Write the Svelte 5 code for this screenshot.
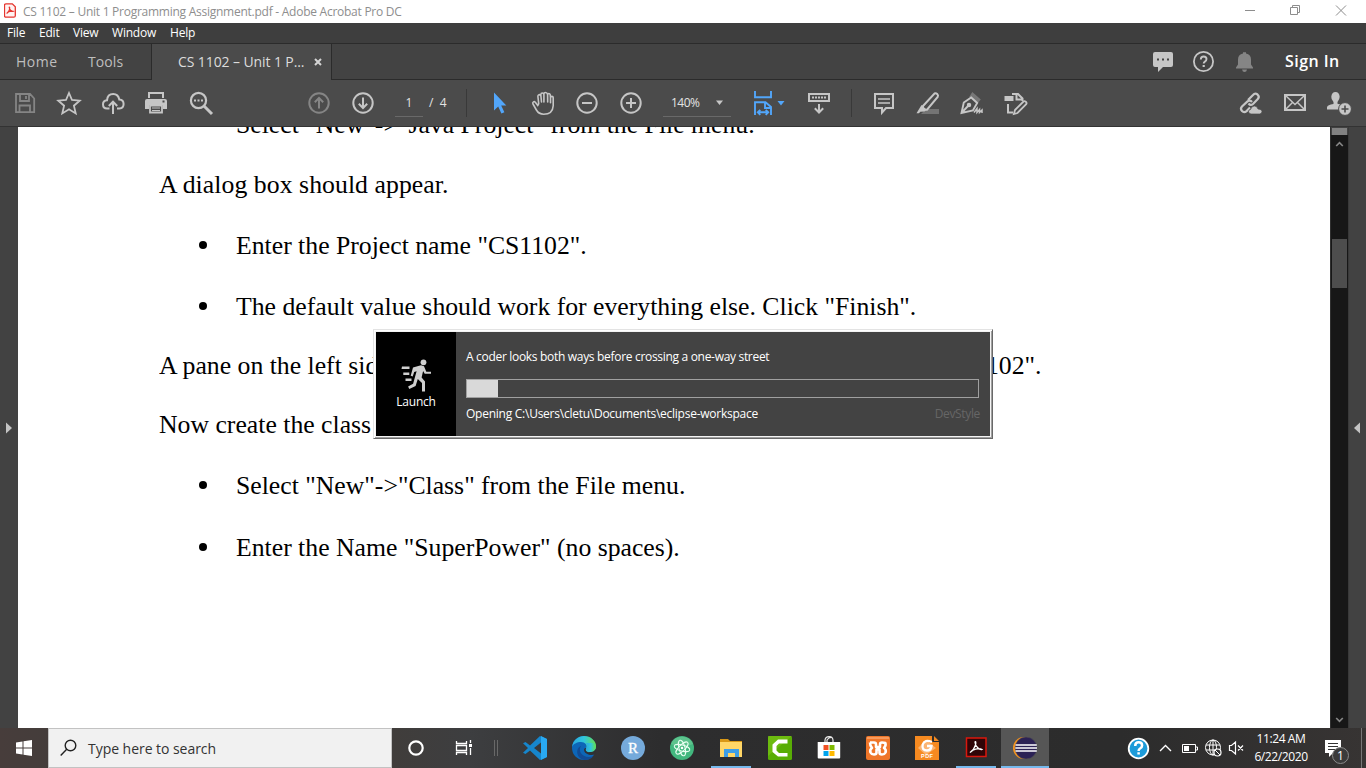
<script>
  const menus = ['File', 'Edit', 'View', 'Window', 'Help'];
</script>

<div class="screen">
  <header class="title">
    <svg class="pdf" width="12" height="15" viewBox="0 0 12 15"><path d="M1.5.8h6.8l3 3v8.900q0 1.500-1.500 1.500h-7.800q-1.500 0-1.500-1.500v-10.400q0-1.500 1.500-1.500z" fill="#fff3f2" stroke="#e5352e" stroke-width="1.300" /><path d="M2.700 10.500c1-1.800 4.500-3 6.600-2.200-1.500.7-4-1.800-4.100-4 .9-.8.8 4-2.500 6.200z" fill="none" stroke="#e5352e" stroke-width="1.200" /></svg>
    <span class="t-title">CS 1102 – Unit 1 Programming Assignment.pdf - Adobe Acrobat Pro DC</span>
    <svg class="winctl" width="126" height="23" viewBox="0 0 126 23" fill="none" stroke="#8d8d8d"><path d="M5 10.500h10M50.500 7.500h7v7h-7zM52.500 7V5.500h7v7H58M96 5.500l10 10M106 5.500l-10 10" /></svg>
  </header>
  <nav class="menu">
    {#each menus as m}<span class="m-{m}">{m}</span>{/each}
  </nav>
  <div class="tabs">
    <div class="home"><span class="t-home">Home</span><span class="t-tools">Tools</span></div>
    <div class="tab"><span class="t-tab">CS 1102 – Unit 1 P...</span><svg width="8" height="8" viewBox="0 0 8 8"><path d="M1 1l6 6M7 1L1 7" stroke="#d4d4d4" stroke-width="2" /></svg></div>
    <div class="account">
      <svg width="124" height="36" viewBox="0 0 124 36">
        <path d="M5 8h16q2 0 2 2v11q0 2-2 2h-8l-5 5v-5H5q-2 0-2-2V10q0-2 2-2z" fill="#c6c6c6" />
        <path d="M7 14.500h2v2H7zM12 14.500h2v2h-2zM17 14.500h2v2h-2z" fill="#444" />
        <circle cx="53.500" cy="17.500" r="9.600" fill="none" stroke="#c6c6c6" stroke-width="1.800" />
        <path d="M50.800 15.500q0-3 2.900-3 2.800 0 2.800 2.600 0 1.600-1.600 2.500-1.200.7-1.200 2" fill="none" stroke="#c6c6c6" stroke-width="1.900" /><path d="M52.600 21h2.200v2h-2.200z" fill="#c6c6c6" />
        <path d="M86 24.500v-1l2-3v-5q0-5 5-6V8.200h3v1.300q5 1 5 6v5l2 3v1z" fill="#858585" /><path d="M92 25.500h5q-.5 2.500-2.500 2.500t-2.500-2.500z" fill="#858585" />
      </svg>
      <b class="t-sign">Sign In</b>
    </div>
  </div>

  <div class="toolbar">
    <svg class="c first" viewBox="0 0 44 46" fill="none" stroke="#858585" stroke-width="1.800"><path d="M13 14h14l4.200 4.500v13.700H13zM17 14v7h9v-7M16.500 32v-6.500h10.500v6.500M23 16v3" /></svg>
    <svg class="c" viewBox="0 0 44 46" fill="none" stroke="#c6c6c6" stroke-width="1.800"><path d="M22 13l3 7 7.700.7-5.800 5 1.800 7.700L22 29.300l-6.700 4.100 1.800-7.700-5.800-5L19 20z" /></svg>
    <svg class="c" viewBox="0 0 44 46" fill="none" stroke="#c6c6c6" stroke-width="2"><path d="M18.500 28.500h-2.500q-4 0-4-4.200 0-3.500 4-4 .5-6.300 6.200-6.300 5 0 6.100 5.500 4.300.3 4.300 4.500t-4.100 4.500h-2.500M22 34V22M17.800 26l4.200-4.300 4.200 4.300" /></svg>
    <svg class="c" viewBox="1 0 44 46"><path d="M14 12h16v6H14zM13 19h18q2 0 2 2v8h-4v-4H15v4h-4v-8q0-2 2-2z" fill="#c6c6c6" /><path d="M16 14h12v4H16zM28.500 20.500h2v2h-2z" fill="#4b4b4b" /><path d="M16 25.500h12v7H16z" fill="#4b4b4b" stroke="#c6c6c6" stroke-width="1.800" /><path d="M18 28h8M18 30.500h8" stroke="#c6c6c6" /></svg>
    <svg class="c" viewBox="0 0 44 46"><circle cx="19.500" cy="20.500" r="7.600" fill="none" stroke="#c6c6c6" stroke-width="2.200" /><path d="M25 26l8 8" stroke="#c6c6c6" stroke-width="3" /><path d="M15 19.500h2v2h-2zM18.500 19.500h2v2h-2zM22 19.500h2v2h-2z" fill="#c6c6c6" /></svg>
    <svg class="c up" viewBox="0 0 44 46" fill="none" stroke="#858585" stroke-width="2"><circle cx="22" cy="23" r="9.700" /><path d="M22 28.500v-10M17.800 22.200l4.200-4.200 4.200 4.200" /></svg>
    <svg class="c" viewBox="0 0 44 46" fill="none" stroke="#c6c6c6" stroke-width="2"><circle cx="22" cy="23" r="9.700" /><path d="M22 17.500v10M17.800 23.800l4.200 4.200 4.200-4.200" /></svg>
    <span class="field page">1</span><span class="t-of">/&nbsp; 4</span>
    <i class="sep s1"></i>
    <svg class="c" viewBox="0 0 44 46"><path d="M17 12.500v18l4.200-4 3.200 7 3-1.300-3.200-6.700h5.100z" fill="#52a6fa" /></svg>
    <svg class="c" viewBox="0 0 44 46" fill="none" stroke="#c6c6c6" stroke-width="1.600" stroke-linecap="round" stroke-linejoin="round"><path d="M16.800 25.500l-2.500-3.300q-1-1-2-.2t-.3 2l3.400 6q2.400 4.200 7.300 4.200 9 0 9.500-8.500v-8q0-1.300-1.300-1.300t-1.400 1.300v5M29.500 17.700l-.3-3.100q-.3-1.100-1.400-1.100T26.600 15l.1 7M26.500 14.500q-.3-2-2-2t-1.600 2V22M22.900 14.500q-.2-1.500-1.600-1.500t-1.500 1.700l.7 7.300M19.600 15.500q-.6-1.100-1.700-.8t-1 1.800l.8 7.200-1 2" /></svg>
    <svg class="c" viewBox="0 0 44 46" fill="none" stroke="#c6c6c6" stroke-width="2"><circle cx="22" cy="23" r="9.700" /><path d="M17 23h10" /></svg>
    <svg class="c" viewBox="0 0 44 46" fill="none" stroke="#c6c6c6" stroke-width="2"><circle cx="22" cy="23" r="9.700" /><path d="M17 23h10M22 18v10" /></svg>
    <div class="field zoom"><span class="t-zoom">140%</span><svg width="7" height="5" viewBox="0 0 7 5"><path d="M0 .5h7L3.500 5z" fill="#c6c6c6" /></svg></div>
    <svg class="c fit" viewBox="0 0 44 46"><g fill="none" stroke="#52a6fa" stroke-width="1.900"><path d="M14 11v6.200h16V11M14 35V22.200h10.500l5.500 4.800v8M24 22.500V28h6M17 32.300h10M19.300 29.800l-2.500 2.500 2.500 2.500M24.700 29.800l2.500 2.500-2.500 2.500" /></g><path d="M36.500 21h7L40 25.500z" fill="#52a6fa" /></svg>
    <svg class="c kb" viewBox="0 0 44 46" fill="none" stroke="#c6c6c6" stroke-width="2"><path d="M12 14h20v7H12zM22 24v8M17.800 28.300l4.200 4.200 4.200-4.200" /><path d="M15 17.500h14" stroke-dasharray="2 1" /></svg>
    <i class="sep s2"></i>
    <svg class="c" viewBox="0 0 44 46" fill="none" stroke="#c6c6c6" stroke-width="2"><path d="M13 14h18v14h-7l-4 4.500V28h-7z" /><path d="M16 19h12M16 23h12" stroke-width="1.500" /></svg>
    <svg class="c" viewBox="1 0 44 46"><path d="M21 29h13v5H16z" fill="#747474" /><path d="M18 26L29.500 13.500q1.300-.7 2.700.6t.5 2.900L22 29.700h-4z" fill="none" stroke="#c6c6c6" stroke-width="2" /><path d="M16.500 25l5 4.500-2 2-4.200.3-1.300 1.500h-2.500z" fill="#c6c6c6" /></svg>
    <svg class="c" viewBox="1 0 44 46" fill="none" stroke="#c6c6c6" stroke-width="1.900"><path d="M21 17.500l2.500-4 7 6-3 3.500" fill="#777" stroke="#777" /><path d="M12.500 33l2.300-10.500 7.400-5 6 5.500-4.300 7.500zM12.500 33l7-7.500" fill="#4b4b4b" /><circle cx="20" cy="25" r="1.300" fill="#c6c6c6" /><path d="M25 32.500l3-4v4l2.500-3v3l2.500-2.500v3" stroke-width="1.500" /></svg>
    <svg class="c stamp" viewBox="1 0 44 46"><path d="M15 24v8.500h5M19 14h6l4.500 4.500V21M23.500 14v5.500h6" fill="none" stroke="#c6c6c6" stroke-width="2" /><path d="M11.500 16h9v5h-9z" fill="#c6c6c6" /><path d="M22 30l8.500-8.500q1-.8 2.300.3t.4 2.400L24.500 33l-3.600 1z" fill="#4b4b4b" stroke="#c6c6c6" stroke-width="1.800" /></svg>
    <svg class="c link" viewBox="1 0 44 46"><g fill="none" stroke="#c6c6c6" stroke-width="2.200"><path d="M20 20l5-5q2-2.300 4.500-.5 2.400 2.200.3 4.600L25 24q-2.400 2-4.500-.5M24 22q-2-2.600-4.500-.6L14 26.500q-2.100 2.400 0 4.600t4.600 0l3.400-3.500" /></g><path d="M23 34q-2.500-.3-2.500-2.400 0-1.900 2.200-2.300.7-3.300 3.800-3.300 2.600 0 3.500 3 4 0 4 2.600 0 2.400-2.500 2.400z" fill="#c6c6c6" stroke="#4b4b4b" stroke-width=".7" /></svg>
    <svg class="c" viewBox="0 0 44 46" fill="none" stroke="#c6c6c6"><path d="M12 15h20v15H12z" stroke-width="2" /><path d="M12.500 15.500l9.500 9 9.500-9M12.500 29.500l7-7M31.500 29.500l-7-7" stroke-width="1.500" /></svg>
    <svg class="c" viewBox="1 0 44 46"><path d="M11 29.500v-2.300q.5-2.400 6.500-3.200v-2q-2.500-3-2.200-5.300.4-4.700 4.200-4.700t4.200 4.700q0 2.500-2.200 5.300v1.800l3.500 1v4.700z" fill="#c6c6c6" /><circle cx="29" cy="29" r="6.400" fill="#c6c6c6" stroke="#4b4b4b" /><path d="M25.500 29h7M29 25.500v7" stroke="#4b4b4b" stroke-width="1.600" /></svg>
  </div>

  <main>
    <aside class="left"><svg width="6" height="12" viewBox="0 0 6 12"><path d="M0 .5L6 6l-6 5.500z" fill="#c4c4c4" /></svg></aside>
    <article>
      <p class="li l0">Select "New"-&gt;"Java Project" from the File menu.</p>
      <p class="l1">A dialog box should appear.</p>
      <p class="li l2"><i></i>Enter the Project name "CS1102".</p>
      <p class="li l3"><i></i>The default value should work for everything else. Click "Finish".</p>
      <p class="l4"><span class="cut">A pane on the left side</span>102".</p>
      <p class="l5">Now create the class</p>
      <p class="li l6"><i></i>Select "New"-&gt;"Class" from the File menu.</p>
      <p class="li l7"><i></i>Enter the Name "SuperPower" (no spaces).</p>
    </article>
    <div class="scroll">
      <div class="grip"></div>
      <div class="track"><svg width="9" height="6" viewBox="0 0 9 6"><path d="M1.200 5L4.500 1.700 7.800 5" fill="none" stroke="#858585" stroke-width="1.700" /></svg><div class="thumb"></div><svg width="9" height="6" viewBox="0 0 9 6"><path d="M1.200 1L4.500 4.300 7.800 1" fill="none" stroke="#858585" stroke-width="1.700" /></svg></div>
    </div>
    <aside class="right"><svg width="6" height="12" viewBox="0 0 6 12"><path d="M6 .5L0 6l6 5.500z" fill="#c4c4c4" /></svg></aside>
  </main>

  <footer>
    <div class="start"><svg width="16" height="16" viewBox="0 0 16 16"><path d="M0 2.500l6.500-1v6H0zM7.500 1.300L16 0v7.500H7.500zM0 8.500h6.500v6L0 13.600zM7.500 8.500H16V16l-8.500-1.300z" fill="#fff" /></svg></div>
    <div class="search"><svg width="18" height="18" viewBox="0 0 18 18" fill="none" stroke="#222" stroke-width="1.400"><circle cx="10.500" cy="6.500" r="5.300" /><path d="M6.700 10.300L.7 16.500" /></svg><span class="t-search">Type here to search</span></div>
    <svg class="sys" width="118" height="40" viewBox="0 0 118 40" fill="none" stroke="#fff"><circle cx="24" cy="20" r="6.700" stroke-width="2.200" /><path d="M64.500 13v2.500h10V13M64.500 27v-2.500h10V27M64.500 17.500h10v5h-10zM78.500 12v3M78.500 20v7" stroke-width="1.300" /><path d="M77 16h3v3h-3z" fill="#fff" stroke="none" /><path d="M102.500 12v16M105.500 12v16" stroke="#686868" /></svg>
    <div class="app"><svg viewBox="0 0 24 24"><path d="M17 0l7 3v18l-7 3L7 14.500 2.500 18 0 16.700 5 12 0 7.300 2.500 6 7 9.500zM18 6.500L11 12l7 5.500z" fill="#1686cc" fill-rule="evenodd" /><path d="M18 0l6 3v18l-6 3z" fill="#29a9f2" /></svg></div>
    <div class="app"><svg viewBox="0 0 24 24"><defs><linearGradient id="eg" x1="0" x2="1"><stop offset="0" stop-color="#2aa8e0" /><stop offset=".5" stop-color="#31c6dc" /><stop offset="1" stop-color="#63df50" /></linearGradient></defs><circle cx="12" cy="12" r="12" fill="#0d66b7" /><path d="M0 11C1 4 6 0 12 0c7 0 12 5 12 10 0 4-3 6-6 6-3.500 0-5-1-4-3 2-4-1-7-5-7-4 0-8 2-9 5z" fill="url(#eg)" /><path d="M9 10c-3 4 0 11 8 11 3 0 4-1 5-2-2 4-6 5-9 5C4 23 3 12 9 10z" fill="#124b94" /><path d="M14.500 12q-2 2.500 1 4 4 1 8.500-3v5q-4 1.500-7 .7-5-1.700-5-5 0-2 2.500-1.700z" fill="#303133" /><path d="M14 13q2-4 0-6h9q2 5-1 8-2 1.300-5 1-4-.8-3-3z" fill="url(#eg)" /></svg></div>
    <div class="app"><svg viewBox="0 0 24 24"><circle cx="12" cy="12" r="12" fill="#75aadb" /><text x="12" y="17" text-anchor="middle" font-family="Liberation Serif" font-size="15" fill="#fff" stroke="#fff" stroke-width=".3">R</text></svg></div>
    <div class="app"><svg viewBox="0 0 24 24"><circle cx="12" cy="12" r="12" fill="#42b77e" /><path d="M1 8A12 12 0 0 1 23 8q-11 5-22 0z" fill="#6fcb98" opacity=".6" /><g fill="none" stroke="#eafff2" stroke-width="1"><ellipse cx="12" cy="12" rx="8" ry="3" transform="rotate(15 12 12)" /><ellipse cx="12" cy="12" rx="8" ry="3" transform="rotate(75 12 12)" /><ellipse cx="12" cy="12" rx="8" ry="3" transform="rotate(135 12 12)" /></g><circle cx="12" cy="12" r="1.300" fill="#fff" /></svg></div>
    <div class="app run"><svg viewBox="0 0 24 24"><path d="M1 3h8l2 2H23v5H1z" fill="#d99816" /><path d="M1 6h22v15H1z" fill="#ffd667" /><path d="M5 21v-8h15v8h-4v-4H9v4z" fill="#3e9ee6" /></svg></div>
    <div class="app"><svg viewBox="0 0 24 24"><rect width="24" height="24" rx="1.500" fill="#58ad05" /><path d="M0 0h24L0 20z" fill="#79c516" opacity=".6" /><path d="M19.500 3.500v4H11L8.500 10v4.500L11 17h8.500v3.500H10L4.500 16V8.500L10 3.500z" fill="#fff" /></svg></div>
    <div class="app store"><svg viewBox="0 0 24 24"><path d="M8 7V4q.5-3 4-3.300T16 4v3M10 7V4q2-3 5-2.500" fill="none" stroke="#e8e8e8" stroke-width="1.200" /><path d="M.7 6h22.500v15.500q0 1-1 1H1.700q-1 0-1-1z" fill="#fff" /><path d="M6.500 9h5v5h-5z" fill="#f15022" /><path d="M12.500 9h5v5h-5z" fill="#7fba00" /><path d="M6.500 15h5v5h-5z" fill="#00a4ef" /><path d="M12.500 15h5v5h-5z" fill="#ffb900" /></svg></div>
    <div class="app"><svg viewBox="0 0 24 24"><rect width="24" height="24" rx="2" fill="#ef7629" /><path d="M1 1h22v2H1z" fill="#f79a5c" /><path d="M4 6.500h4q2 0 2 2V11h4V8.500q0-2 2-2t3.300.5q1 2.500-1.300 5 2.500 1.500 1.500 4.500-1 2-3.500 2t-2.500-2V13.500h-3v3q0 2-2.500 2t-3.500-2q-1-3 1.500-4.500Q4 10 4 6.500" fill="none" stroke="#fff" stroke-width="2.600" stroke-linejoin="round" /></svg></div>
    <div class="app"><svg viewBox="0 0 24 24"><path d="M0 0h17v6h7v18H0z" fill="#f68a20" /><path d="M19 0l5 5h-5z" fill="#f68a20" /><path d="M3 12l8-8 10 8-10 7z" fill="#fab472" /><path d="M17 6q-7.500-3-9.300 2.500Q6.500 14.500 12 14.500q4 0 4.500-4.500H12" fill="none" stroke="#fff" stroke-width="2.300" /><text x="12.200" y="22.300" text-anchor="middle" font-family="Liberation Sans" font-weight="700" font-size="5.500" fill="#fff" letter-spacing=".4">PDF</text></svg></div>
    <div class="app run"><svg viewBox="0 0 24 24"><path d="M2.500 2h19.500v18.500H2.500z" fill="#300507" stroke="#d9170d" stroke-width="1.500" /><path d="M6 16.500c2-3 9-5 12-3-2 1-7-3-7-7.500 1.500-2 1.500 6-5 10.500z" fill="none" stroke="#fff" stroke-width="1.300" /></svg></div>
    <div class="app run active"><svg viewBox="0 0 24 24"><circle cx="11" cy="12" r="11" fill="#f7941e" /><circle cx="13" cy="12" r="11" fill="#2c2255" stroke="#555" stroke-width=".5" /><path d="M2.500 9h21.300M2.300 12h22M2.500 15h21.300" stroke="#fff" stroke-width="1.700" /></svg></div>
    <svg class="tray" width="122" height="40" viewBox="0 0 122 40" fill="none" stroke="#fff"><circle cx="14.500" cy="20.500" r="9.800" fill="#1c9bd9" stroke-width="1.800" /><path d="M11.200 18q0-3.700 3.500-3.700 3.400 0 3.400 3.200 0 1.900-2 3-1.500.8-1.500 2.400M14.600 24.300v2.200" stroke-width="2.500" /><path d="M36 23l5.500-5.500L47 23" stroke-width="1.400" /><path d="M58.500 16.500h13v8h-13zM72 19h1.500v3H72" /><path d="M60 18h5v5h-5z" fill="#fff" stroke="none" /><circle cx="89" cy="19.500" r="7.500" /><ellipse cx="89" cy="19.500" rx="3.500" ry="7.500" /><path d="M82 17h14M82 22h14M89 12v15" /><circle cx="93.500" cy="24.500" r="3.500" fill="#333" stroke-width="1.200" /><path d="M91 22l5 5" /><path d="M105.500 17.500h2l4-3.500v12l-4-3.500h-2zM114 17.500l5 5M119 17.500l-5 5" stroke-width="1.200" /></svg>
    <div class="clock"><span class="t-time">11:24 AM</span><span class="t-date">6/22/2020</span></div>
    <svg class="note" width="42" height="40" viewBox="0 0 42 40"><path d="M1 12h16v13H9l-4 4v-4H1z" fill="#fff" /><path d="M4 15.500h10M4 18.500h10M4 21.500h10" stroke="#333" stroke-width="1.200" /><circle cx="16.500" cy="27.500" r="8" fill="#3b3b3b" stroke="#8b8b8b" /><text x="16.500" y="32" text-anchor="middle" font-family="Open Sans" font-size="12" fill="#fff">1</text><path d="M37.500 0v40" stroke="#777" /></svg>
  </footer>

  <section class="splash">
    <div class="brand"><svg width="30" height="33" viewBox="0 0 30 33"><g fill="#d0d0d0"><circle cx="22.500" cy="3.300" r="2.900" /><path d="M12 8.500l8-2.300 3 1 2.300 5.500h5v2h-6.600l-1.600-2.600-1.500 6.500 3.400 4v10h-3v-8.500l-4.200-4-2.200 6.800-6.300 3.200-1.200-2.500 5-2.800 3.500-12.500-2.400.8-1.500 4.400-2-.8z" /><path d="M1 7.500h7.500v2.400H.5zM2.300 13.500h6v2.400h-6zM4.500 19.500h6v2.400h-6z" /></g></svg><span class="t-launch">Launch</span></div>
    <div class="info">
      <span class="t-quote">A coder looks both ways before crossing a one-way street</span>
      <div class="bar"><div class="fill"></div></div>
      <div class="status"><span class="t-open">Opening C:\Users\cletu\Documents\eclipse-workspace</span><span class="t-dev">DevStyle</span></div>
    </div>
  </section>
</div>

<style>
  :global(body) { margin: 0; overflow: hidden; }
  .screen { position: relative; width: 1366px; height: 768px; overflow: hidden; display: flex; flex-direction: column; font-family: "Open Sans", "Noto Sans", sans-serif; background: #424242; }
  .screen * { box-sizing: border-box; }
  svg { display: block; flex: none; }
  span, b { white-space: nowrap; flex: none; }
  .title { height: 23px; background: #fff; display: flex; align-items: center; font-size: 12px; color: #8e8e8e; }
  .pdf { margin: -2px 7px 0 4px; }
  .t-title { letter-spacing: -.255px; }
  .winctl { margin-left: auto; }
  .menu { height: 20px; background: #3e3e3e; display: flex; align-items: center; padding-left: 7px; font-size: 12px; color: #fff; line-height: 20px; letter-spacing: -.2px; }
  .m-File { width: 32px; } .m-Edit { width: 34px; } .m-View { width: 39px; } .m-Window { width: 58px; }
  .tabs { height: 37px; display: flex; border-top: 1px solid #2b2b2b; background: #434343; }
  .home { width: 151px; display: flex; align-items: center; padding-left: 16px; font-size: 14px; color: #bebebe; border-bottom: 1px solid #2b2b2b; }
  .t-home { width: 72px; letter-spacing: .5px; }
  .t-tools { letter-spacing: .1px; }
  .tab { width: 181px; background: #4b4b4b; border: 1px solid #2b2b2b; border-width: 0 1px; display: flex; align-items: center; padding: 0 0 1px 26px; font-size: 14px; color: #dcdcdc; }
  .t-tab { width: 136px; letter-spacing: -.1px; }
  .account { flex: 1; display: flex; align-items: center; justify-content: flex-end; padding-right: 25px; border-bottom: 1px solid #2b2b2b; color: #fff; font-size: 16px; }
  .account svg { margin-right: 11px; }
  .account b { font-weight: 600; width: 56px; letter-spacing: .45px; line-height: 20px; padding-bottom: 2px; }
  .toolbar { height: 47px; background: #4b4b4b; border-bottom: 1px solid #333; display: flex; color: #e3e3e3; font-size: 12px; }
  .c { width: 44px; height: 46px; }
  .first { margin-left: 3px; } .up { margin-left: 74px; }
  .field { height: 37px; border-bottom: 1px solid #696969; display: flex; align-items: center; padding-top: 9px; }
  .page { width: 28px; margin-left: 10px; justify-content: center; }
  .t-of { margin-left: 6px; width: 37px; line-height: 46px; }
  .sep { width: 1px; height: 28px; background: #393939; margin-top: 9px; }
  .s1 { margin: 9px 10px 0 0; }
  .zoom { width: 68px; margin-left: 10px; padding-left: 8px; }
  .t-zoom { width: 45px; letter-spacing: -.5px; }
  .fit { margin-left: 10px; } .kb { margin-left: 12px; } .s2 { margin: 9px 10px 0 10px; }
  .stamp { margin-left: 0; } .link { margin-left: auto; } .toolbar :last-child { margin-right: 5px; }
  main { height: 601px; display: flex; }
  .left { width: 18px; display: flex; align-items: center; padding-left: 6px; }
  article { width: 1312px; background: #fff; padding-left: 141px; overflow: hidden; font: 25.73px/30px "Liberation Serif", serif; color: #000; }
  p { margin: 0; height: 30px; white-space: nowrap; display: flex; }
  .li { padding-left: 77px; }
  .li i { width: 8px; height: 8px; border-radius: 50%; background: #000; margin: 10px 29px 0 -37px; }
  .l0 { margin-top: -17px; } .l1 { margin-top: 30px; } .l2, .l3, .l6 { margin-top: 31px; } .l4, .l5 { margin-top: 29px; } .l7 { margin-top: 32px; }
  .l1 { letter-spacing: .06px; }
  .cut { width: 827px; overflow: hidden; }
  .scroll { width: 18px; border-left: 1px solid #303030; }
  .grip { height: 7px; margin: 1px 1px 0; background: #818181; }
  .track { height: 593px; background: #171717; display: flex; flex-direction: column; align-items: center; padding: 6px 0 5px; }
  .thumb { width: 15px; height: 49px; margin: 92px 0 auto; background: #4d4d4d; }
  .right { width: 18px; border-left: 1px solid #393939; display: flex; align-items: center; padding-left: 5px; }
  footer { height: 40px; display: flex; background: linear-gradient(90deg, #473d3b, #443d3b 50px, #403d3b 392px, #3d3e40 470px, #2d2d2e 660px, #2c2c2c 1120px, #373433); }
  .start { width: 48px; display: grid; place-items: center; }
  .search { width: 344px; background: #f1f1f1; border: 1px solid #c2c2c2; display: flex; align-items: center; padding-left: 11px; font-size: 14px; color: #333; }
  .t-search { margin-left: 10px; letter-spacing: -.04px; }
  .app { width: 49px; height: 40px; display: grid; place-items: center; }
  .app svg { width: 24px; height: 24px; }
  .run { background: linear-gradient(#76b9ed, #76b9ed) 50% 100% / 40px 2px no-repeat; }
  .active { width: 48px; margin-left: 1px; background: linear-gradient(#76b9ed, #76b9ed) 0 100% / 100% 2px no-repeat #565656; }
  .tray { margin-left: 75px; }
  .clock { width: 74px; display: flex; flex-direction: column; align-items: center; justify-content: center; font-size: 12px; line-height: 18px; color: #fff; margin-left: -2px; letter-spacing: -.4px; }
  .note { margin-left: 6px; }
  .splash { position: absolute; left: 373px; top: 329px; width: 620px; height: 110px; display: flex; border: 1px solid #e3e3e3; border-right-color: #696969; border-bottom-color: #696969; box-shadow: inset 1px 1px #fff, inset -1px -1px #a0a0a0; padding: 2px; background: #f4f4f4; color: #fff; font-size: 12px; }
  .brand { width: 80px; background: #000; display: flex; flex-direction: column; align-items: center; padding-top: 27px; }
  .t-launch { line-height: 18px; margin-top: 1px; letter-spacing: -.2px; }
  .info { flex: 1; background: #434343; padding: 16px 11px 0 10px; display: flex; flex-direction: column; }
  .t-quote { line-height: 18px; letter-spacing: -.31px; }
  .bar { margin-top: 13px; height: 19px; border: 1px solid #a0a0a0; }
  .fill { width: 31px; height: 17px; background: #d9d9d9; }
  .status { display: flex; justify-content: space-between; line-height: 18px; margin: 7px -1px 0 0; }
  .t-open { letter-spacing: -.25px; }
  .t-dev { color: #666; letter-spacing: -.35px; }
</style>
